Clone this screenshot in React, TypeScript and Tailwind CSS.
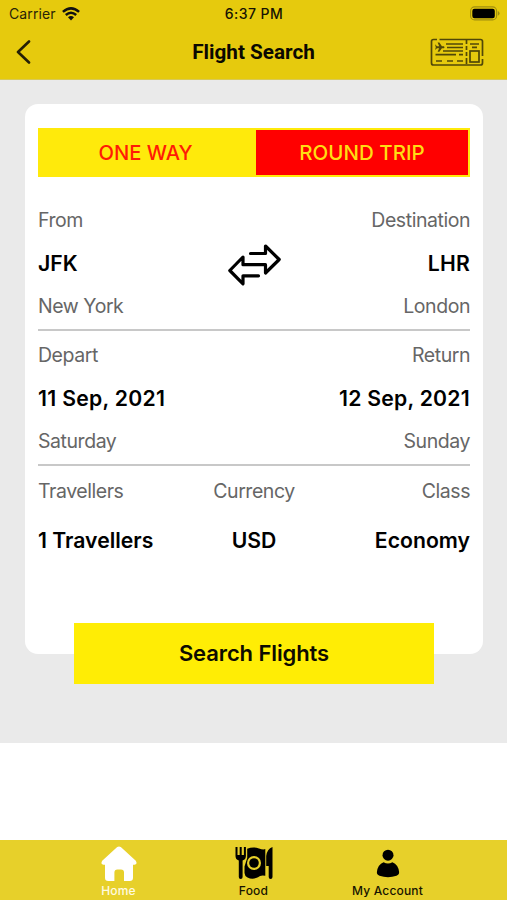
import React from "react";

type CellProps = { children: React.ReactNode; className?: string };

const Label = ({ children, className = "" }: CellProps) => (
  <div className={`h-[43px] whitespace-nowrap text-[19.5px] leading-[43px] tracking-[-0.45px] text-[#666666] ${className}`}>{children}</div>
);

const Value = ({ children, className = "" }: CellProps) => (
  <div className={`h-[43px] whitespace-nowrap text-[21.2px] font-semibold leading-[42px] text-black ${className}`}>{children}</div>
);

const WifiIcon = () => (
  <svg width="18" height="14" viewBox="0 0 18 14" fill="none" stroke="#111" strokeWidth="2.5">
    <path d="M.9 4.9Q9-2.2 17.1 4.9" />
    <path d="M3.8 8Q9 3.6 14.2 8" />
    <path d="M6 10.3Q9 7.8 12 10.3L9 13.4Z" fill="#111" stroke="none" />
  </svg>
);

const BatteryIcon = () => (
  <svg width="30" height="15" viewBox="0 0 30 15">
    <rect x=".6" y=".9" width="26" height="13" rx="4" fill="none" stroke="#a08e0f" strokeWidth="1.1" />
    <rect x="2.3" y="2.7" width="22.5" height="9.5" rx="2.2" fill="#000" />
    <path d="M27.8 5.1Q29.6 6 29.6 7.4T27.8 9.7Z" fill="#a08e0f" />
  </svg>
);

const TicketIcon = () => (
  <svg width="54" height="29" viewBox="0 0 54 29" fill="none" stroke="#514808" strokeWidth="1.7">
    <path d="M7 1.5H3.5Q1.5 1.5 1.5 3.5V25Q1.5 27 3.5 27H50.5Q52.5 27 52.5 25V21M52.5 18V3.5Q52.5 1.5 50.5 1.5H9.5" />
    <path d="M36.5 2V6M36.5 8V12M36.5 14V18M36.5 20V26" />
    <path d="M16 6H33M17 9.5H33M13 13H33M5.5 16.7H26M29 16.7H33" />
    <path d="M6 23H12M17 23H23M27 23H33" />
    <path d="M40 6H49M42 9.3H47" />
    <rect x="40" y="13" width="9" height="11" />
    <path d="M5 6.3L7 8.2H9.2L7.6 4.6H9.4L11.9 8.2H13.9L14.6 9.2L13.9 10.2H11.9L9.4 13.8H7.6L9.2 10.2H7L5 12.1L5.8 9.2Z" fill="#514808" stroke="none" />
  </svg>
);

const SwapIcon = () => (
  <svg width="54" height="42" viewBox="0 0 54 42" fill="none" stroke="#000" strokeWidth="3.2" strokeLinecap="round" strokeLinejoin="round">
    <path d="M22.5 9.5H37.5V2L51.2 15.5L37.5 29V20.7H15V13L1.8 26.5L15 39.8V31.8H30.5" />
  </svg>
);

const HomeIcon = () => (
  <svg width="38" height="36" viewBox="0 0 38 36" fill="#fff">
    <path d="M17.2 1Q19 0 20.8 1L35.8 14.7Q37.8 18 34.5 18.8H33V31.8Q33 35 29.8 35H24V26.5Q24 23.6 21 23.6H17.4Q14.4 23.6 14.4 26.5V35H8.2Q5 35 5 31.8V18.8H3.5Q.2 18 2.2 14.7Z" />
  </svg>
);

const FoodIcon = () => (
  <svg width="38" height="34" viewBox="0 0 38 34">
    <path d="M.5 1V10Q.5 13.5 3.8 14.5V31Q3.8 33 5.7 33T7.6 31V14.5Q10.9 13.5 10.9 10V1H8.9V9H6.7V1H4.7V9H2.5V1Z" />
    <path d="M12.2 2.8Q18 .2 24 2.4Q28 4 30.3 3.1V29.8Q25.5 28.8 23 31.2Q17.7 34 12.5 31.5Q9.8 30.5 9.5 27V20.5L12.2 12Z" />
    <circle cx="19" cy="17" r="7" fill="#e7d02a" />
    <circle cx="19" cy="17" r="4.8" />
    <path d="M37.5 1V31Q37.5 33 35.6 33T33.7 31V20H31.2V10Q32 3 37.5 1Z" />
  </svg>
);

const AccountIcon = () => (
  <svg width="24" height="30" viewBox="0 0 24 30">
    <circle cx="12" cy="6.2" r="5.5" />
    <path d="M7.6 13.2Q12 16 16.4 13.2Q22.3 15.5 23.1 23Q23.4 25.5 20.5 26.8Q12 29.6 3.5 26.8Q.6 25.5 .9 23Q1.7 15.5 7.6 13.2Z" />
  </svg>
);

export default function App() {
  return (
    <div className="flex h-[900px] w-[507px] flex-col overflow-hidden bg-white font-['Inter',sans-serif]">
      <header className="h-[80px] shrink-0 border-b border-[#d8c957] bg-[#e6ca0d]">
        <div className="grid h-[27px] grid-cols-3 items-center pl-[9px] pr-[7px]">
          <div className="flex items-center gap-[6px] text-[14px] text-[#292407]">
            <span className="tracking-[0.1px]">Carrier</span>
            <WifiIcon />
          </div>
          <div className="pr-px text-center text-[14px] font-medium tracking-[0.45px] text-[#161303]">6:37 PM</div>
          <div className="flex justify-end"><BatteryIcon /></div>
        </div>
        <div className="grid h-[50px] grid-cols-3 items-center pl-[16px] pr-[23px]">
          <svg width="15" height="24" viewBox="0 0 15 24" fill="none" stroke="#252006" strokeWidth="2.6" strokeLinecap="round" strokeLinejoin="round">
            <path d="M13 1.5L2 12L13 22.5" />
          </svg>
          <h1 className="whitespace-nowrap pl-[7px] pt-px text-center font-['Roboto',sans-serif] text-[20.7px] font-bold text-[#0b0901]">Flight Search</h1>
          <div className="flex justify-end"><TicketIcon /></div>
        </div>
      </header>

      <main className="h-[663px] shrink-0 bg-[#eaeaea] pl-[25px] pr-[24px] pt-[24px]">
        <section className="flex h-[550px] flex-col rounded-[13px] bg-white px-[13px] pt-[24px]">
          <div className="flex h-[49px] shrink-0 bg-[#ffea0b] py-[2px] pr-[2px] text-[20.2px] font-medium">
            <button className="w-[218px] pr-[3px] pt-[2px] text-[#ff1b05]">ONE WAY</button>
            <button className="flex-1 bg-[#ff0000] pt-[2px] text-[20.5px] text-[#ffdd13]">ROUND TRIP</button>
          </div>

          <div className="mt-[22px] flex h-[132px] shrink-0 items-start justify-between border-b-2 border-[#c8c8c8]">
            <div className="w-[150px]"><Label>From</Label><Value>JFK</Value><Label>New York</Label></div>
            <div className="pl-px pt-[45px]"><SwapIcon /></div>
            <div className="w-[150px] text-right"><Label>Destination</Label><Value className="tracking-[0.2px]">LHR</Value><Label>London</Label></div>
          </div>

          <div className="flex h-[135px] shrink-0 justify-between border-b-2 border-[#c8c8c8] pt-[3px]">
            <div><Label>Depart</Label><Value className="tracking-[0.3px]">11 Sep, 2021</Value><Label>Saturday</Label></div>
            <div className="text-right"><Label>Return</Label><Value className="tracking-[0.25px]">12 Sep, 2021</Value><Label>Sunday</Label></div>
          </div>

          <div className="grid grid-cols-3 gap-y-[6px] pt-[4px]">
            <Label>Travellers</Label><Label className="text-center">Currency</Label><Label className="text-right">Class</Label>
            <Value>1 Travellers</Value><Value className="text-center">USD</Value><Value className="text-right">Economy</Value>
          </div>
        </section>
        <button className="relative mx-auto -mt-[31px] block h-[61px] w-[360px] bg-[#ffed05] text-[22px] font-semibold tracking-[-0.1px] text-[#0d0b00]">Search Flights</button>
      </main>

      <nav className="mt-auto flex h-[60px] justify-center bg-[#e7d02a] pr-[2px] text-[12px] font-medium tracking-[0.2px]">
        <div className="flex w-[135px] flex-col items-center pt-[6px] text-[#fffbe0]">
          <div className="h-[37px]"><HomeIcon /></div><span className="leading-[16px]">Home</span>
        </div>
        <div className="flex w-[135px] flex-col items-center pt-[6px] text-[#171400]">
          <div className="h-[37px]"><FoodIcon /></div><span className="leading-[16px]">Food</span>
        </div>
        <div className="flex w-[133px] flex-col items-center pt-[9px] text-[#171400]">
          <div className="h-[34px]"><AccountIcon /></div><span className="whitespace-nowrap leading-[16px]">My Account</span>
        </div>
      </nav>
    </div>
  );
}
